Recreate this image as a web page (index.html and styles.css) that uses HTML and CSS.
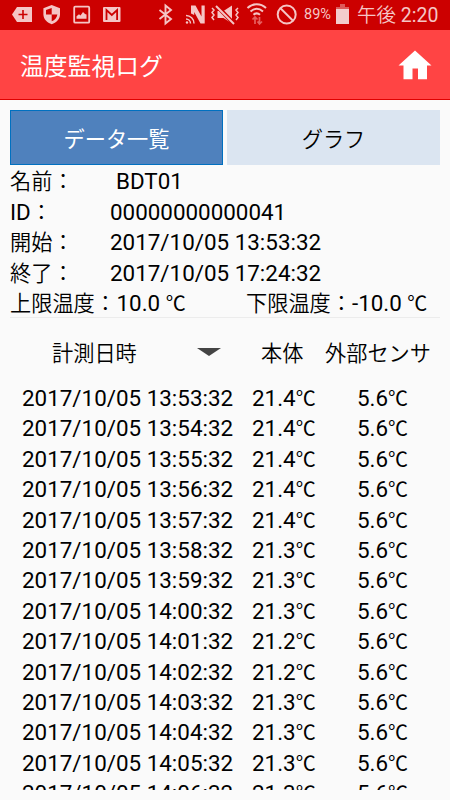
FILE: index.html
```
<!DOCTYPE html>
<html lang="ja">
<head>
    <meta charset="UTF-8">
    <meta name="viewport" content="width=device-width, initial-scale=1.0">
    <title>温度監視ログ</title>
    <link rel="stylesheet" href="styles.css">
</head>
<body>
    <div class="status-bar">
        <svg class="status-icons" width="300" height="30" viewBox="0 0 300 30">
            <!-- add tag -->
            <path fill="#f5c5c5" d="M12 14.5L17 7h15v15H17z"/>
            <path stroke="#cc0000" stroke-width="1.6" d="M18.5 14.5h9M23 10v9"/>
            <!-- shield -->
            <path fill="#f5c5c5" d="M51.7 5l8.3 3.2v6c0 5-3.8 8.5-8.3 10-4.5-1.5-8.3-5-8.3-10v-6z"/>
            <path fill="#cc0000" d="M51.7 8v6.500h-5.700V10zM51.7 14.500h5.700c-.5 3.500-2.700 5.500-5.700 6.800z"/>
            <!-- picture -->
            <rect x="74.2" y="6.700" width="15" height="16" rx="1" fill="none" stroke="#f5c5c5" stroke-width="1.800"/>
            <path fill="#f5c5c5" d="M76.500 18.700v-2.500l2.500-2 1.500 1.300 2.500-3.500 2 2 1.500.5v4.200z"/>
            <!-- mail -->
            <rect x="103" y="7" width="17.500" height="15" rx="1" fill="#f5c5c5"/>
            <path fill="none" stroke="#cc0000" stroke-width="1.800" d="M106.500 20V10l5.300 5 5.300-5v10"/>
            <!-- bluetooth -->
            <path fill="none" stroke="#f5c5c5" stroke-width="1.900" d="M159.500 10l11.500 9-5.500 4.500V5.500l5.500 4.500-11.500 9"/>
            <!-- nfc -->
            <path fill="#f5c5c5" d="M191 5.500h4.500l6 11v-11h3.200v18h-4.200l-6.300-11.500v3L191 13.500z"/>
            <path fill="none" stroke="#f5c5c5" stroke-width="1.500" d="M186 15.500a8 8 0 0 1 8 8M186 19a4.500 4.500 0 0 1 4.500 4.500"/>
            <circle cx="187" cy="22.500" r="1.200" fill="#f5c5c5"/>
            <!-- vibrate / mute -->
            <path fill="#f5c5c5" d="M217.500 11h6l8.500-5.500v18l-8.500-5.500h-6z"/>
            <path stroke="#cc0000" stroke-width="4" d="M216 5l18 19"/>
            <path stroke="#f5c5c5" stroke-width="1.900" d="M216 6l18 18"/>
            <path fill="none" stroke="#f5c5c5" stroke-width="1.500" d="M212 8l2 2-2 2.500 2 2.500-2 2.500 2 2.500M238 8l-2 2 2 2.500-2 2.500 2 2.500-2 2.500"/>
            <!-- wifi -->
            <path fill="none" stroke="#f5c5c5" stroke-width="2" d="M247.500 8c5.500-5 13-5 18.500 0M250.500 11.500c4-3.500 8.500-3.500 12.500 0M253.500 14.800c2-1.800 4.500-1.800 6.500 0"/>
            <path fill="none" stroke="#e65f5f" stroke-width="1.700" d="M255 24v-7M252.500 19.500L255 17l2.500 2.500M259.500 17v7M257.500 21.500l2 2.500 2.500-2.500"/>
            <!-- blocked -->
            <circle cx="286.700" cy="14.500" r="9" fill="none" stroke="#f5c5c5" stroke-width="2"/>
            <path stroke="#f5c5c5" stroke-width="2" d="M280.500 8.300l12.500 12.500"/>
        </svg>
        <span class="battery-text">89%</span>
        <svg class="battery" width="13" height="30" viewBox="0 0 13 30">
            <path fill="#dc5a5a" d="M4 4h5v3h4v2H0V7h4z"/>
            <path fill="#f3cccc" d="M0 9h13v15H0z"/>
        </svg>
        <span class="clock"><span class="ja">午後</span> 2:20</span>
    </div>

    <div class="header">
        <h1 class="ja">温度監視ログ</h1>
        <svg class="home" width="34" height="30" viewBox="0 0 34 30">
            <path fill="#fff" d="M17 .5L33.500 15.500H29V29.300h-9V18.500h-5.500v10.800h-9V15.500H.5z"/>
        </svg>
    </div>

    <div class="container">
        <div class="tabs">
            <div class="tab active ja">データ一覧</div>
            <div class="tab ja">グラフ</div>
        </div>

        <div class="info">
            <div class="info-row"><span class="label"><span class="ja">名前：</span></span><span class="name">BDT01</span></div>
            <div class="info-row"><span class="label">ID<span class="ja">：</span></span><span>00000000000041</span></div>
            <div class="info-row"><span class="label"><span class="ja">開始：</span></span><span>2017/10/05 13:53:32</span></div>
            <div class="info-row"><span class="label"><span class="ja">終了：</span></span><span>2017/10/05 17:24:32</span></div>
            <div class="info-row">
                <span class="limit"><span class="ja">上限温度：</span> <span class="upper">10.0</span> <span class="ja unit">℃</span></span>
                <span><span class="ja">下限温度：</span>-10.0 <span class="ja unit">℃</span></span>
            </div>
        </div>

        <div class="list-header ja">
            <div class="date-head">計測日時 <span class="arrow"></span></div>
            <div class="body-head">本体</div>
            <div class="sensor-head">外部センサ</div>
        </div>

        <div class="list">
            <div class="row"><span>2017/10/05 13:53:32</span><span>21.4<span class="ja unit">℃</span></span><span>5.6<span class="ja unit">℃</span></span></div>
            <div class="row"><span>2017/10/05 13:54:32</span><span>21.4<span class="ja unit">℃</span></span><span>5.6<span class="ja unit">℃</span></span></div>
            <div class="row"><span>2017/10/05 13:55:32</span><span>21.4<span class="ja unit">℃</span></span><span>5.6<span class="ja unit">℃</span></span></div>
            <div class="row"><span>2017/10/05 13:56:32</span><span>21.4<span class="ja unit">℃</span></span><span>5.6<span class="ja unit">℃</span></span></div>
            <div class="row"><span>2017/10/05 13:57:32</span><span>21.4<span class="ja unit">℃</span></span><span>5.6<span class="ja unit">℃</span></span></div>
            <div class="row"><span>2017/10/05 13:58:32</span><span>21.3<span class="ja unit">℃</span></span><span>5.6<span class="ja unit">℃</span></span></div>
            <div class="row"><span>2017/10/05 13:59:32</span><span>21.3<span class="ja unit">℃</span></span><span>5.6<span class="ja unit">℃</span></span></div>
            <div class="row"><span>2017/10/05 14:00:32</span><span>21.3<span class="ja unit">℃</span></span><span>5.6<span class="ja unit">℃</span></span></div>
            <div class="row"><span>2017/10/05 14:01:32</span><span>21.2<span class="ja unit">℃</span></span><span>5.6<span class="ja unit">℃</span></span></div>
            <div class="row"><span>2017/10/05 14:02:32</span><span>21.2<span class="ja unit">℃</span></span><span>5.6<span class="ja unit">℃</span></span></div>
            <div class="row"><span>2017/10/05 14:03:32</span><span>21.3<span class="ja unit">℃</span></span><span>5.6<span class="ja unit">℃</span></span></div>
            <div class="row"><span>2017/10/05 14:04:32</span><span>21.3<span class="ja unit">℃</span></span><span>5.6<span class="ja unit">℃</span></span></div>
            <div class="row"><span>2017/10/05 14:05:32</span><span>21.3<span class="ja unit">℃</span></span><span>5.6<span class="ja unit">℃</span></span></div>
            <div class="row"><span>2017/10/05 14:06:32</span><span>21.3<span class="ja unit">℃</span></span><span>5.6<span class="ja unit">℃</span></span></div>
        </div>
    </div>
</body>
</html>
```

FILE: styles.css
```
* {
    box-sizing: border-box;
}

body {
    margin: 0;
    height: 800px;
    overflow: hidden;
    display: flex;
    flex-direction: column;
    font-family: Roboto, "Noto Sans CJK JP", sans-serif;
    font-size: 22.4px;
    line-height: 30.4px;
    color: #000;
    background-color: #fafafa;
}

.ja {
    font-family: "Noto Sans CJK JP", sans-serif;
    font-size: 21.2px;
    font-weight: 350;
    line-height: 1;
}

.unit {
    font-size: 20px;
    font-weight: 400;
}

.status-bar {
    display: flex;
    flex: none;
    height: 30px;
    line-height: 30px;
    background-color: #cc0000;
    color: #f5c5c5;
    white-space: nowrap;
}

.status-icons {
    flex: none;
}

.battery-text {
    width: 36px;
    padding-left: 4px;
    font-size: 14.5px;
}

.battery {
    flex: none;
}

.clock {
    padding: 1px 0 0 8px;
    font-size: 19.5px;
}

.clock .ja {
    font-size: 19.5px;
}

.header {
    display: flex;
    flex: none;
    justify-content: space-between;
    align-items: center;
    height: 70px;
    padding: 0 18px 0 20px;
    background-color: #ff4444;
    border-bottom: 1px solid #e00000;
}

h1 {
    margin: 0;
}

h1.ja {
    padding-top: 1px;
    color: #fff;
    font-size: 23.8px;
    font-weight: 400;
}

.container {
    display: flex;
    flex-direction: column;
    height: 690px;
    padding: 10px 10px 0;
}

.tabs {
    display: grid;
    flex: none;
    grid-template-columns: 213px 213px;
    gap: 4px;
    height: 55px;
}

.tab {
    display: flex;
    justify-content: center;
    align-items: center;
    background-color: #dbe5f1;
}

.tab.active {
    color: #fff;
    font-weight: 400;
    background-color: #4f81bd;
    border: 1px solid #0070c0;
}

.info {
    flex: none;
    height: 153px;
    padding-top: 1.4px;
    border-bottom: 1px solid #ececec;
}

.info-row {
    display: flex;
    height: 30.4px;
    white-space: nowrap;
}

.label {
    width: 100px;
}

.name {
    padding-left: 6px;
}

.limit {
    width: 236px;
}

.upper {
    margin-left: -5px;
}

.list-header {
    display: flex;
    flex: none;
    align-items: center;
    height: 65px;
    padding-top: 3px;
    white-space: nowrap;
}

.date-head {
    display: flex;
    justify-content: space-between;
    align-items: center;
    width: 251px;
    padding: 0 40px 0 42px;
}

.arrow {
    border: 12px solid transparent;
    border-top: 8px solid #444;
    border-bottom: 0;
}

.body-head {
    width: 64px;
}

.list {
    flex: 1;
    overflow: hidden;
    padding: 0 12px;
}

.row {
    display: grid;
    grid-template-columns: 230px 105px 1fr;
    height: 30.4px;
    white-space: nowrap;
}
```
